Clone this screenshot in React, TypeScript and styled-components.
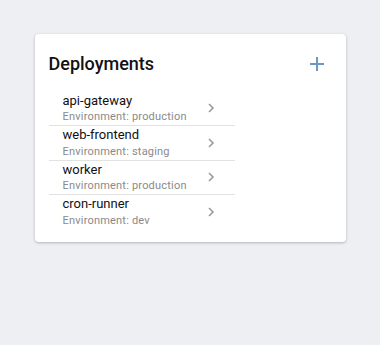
import React from 'react';
import styled, { createGlobalStyle } from 'styled-components';

const deployments = [
  { name: 'api-gateway', env: 'production' },
  { name: 'web-frontend', env: 'staging' },
  { name: 'worker', env: 'production' },
  { name: 'cron-runner', env: 'dev' },
];

const App: React.FC = () => {
  return (
    <>
      <GlobalStyle />
      <StyledPage>
        <StyledCard>
          <StyledHeader>
            <StyledTitle>Deployments</StyledTitle>
            <StyledAddButton aria-label="Add deployment">
              <svg width="14" height="14" viewBox="0 0 14 14">
                <path d="M7 0v14M0 7h14" stroke="currentColor" strokeWidth="2" fill="none" />
              </svg>
            </StyledAddButton>
          </StyledHeader>

          <StyledList>
            {deployments.map((d, i) => (
              <StyledRow key={d.name} $last={i === deployments.length - 1}>
                <StyledText>
                  <StyledName>{d.name}</StyledName>
                  <StyledEnv>Environment: {d.env}</StyledEnv>
                </StyledText>
                <StyledChevron width="8" height="10" viewBox="0 0 8 10">
                  <path d="M2 1l4 4-4 4" stroke="currentColor" strokeWidth="1.6" fill="none" />
                </StyledChevron>
              </StyledRow>
            ))}
          </StyledList>
        </StyledCard>
      </StyledPage>
    </>
  );
};

export default App;

// Style Tags
const GlobalStyle = createGlobalStyle`
  html, body {
    margin: 0;
    padding: 0;
    background: #eeeff3;
    font-family: Roboto, "Liberation Sans", sans-serif;
  }
`;

const StyledPage = styled.div`
  width: 380px;
  height: 345px;
  box-sizing: border-box;
  padding-top: 34px;
  display: flex;
  justify-content: center;
  align-items: flex-start;
`;

const StyledCard = styled.div`
  width: 311px;
  box-sizing: border-box;
  background: #fff;
  border-radius: 4px;
  box-shadow: 0 1px 3px rgba(0, 0, 0, 0.25);
  padding: 17px 14px 13px 14px;
`;

const StyledHeader = styled.div`
  display: flex;
  align-items: center;
  justify-content: space-between;
  height: 26px;
  margin-bottom: 14.5px;
`;

const StyledTitle = styled.h2`
  margin: 0;
  font-size: 18px;
  font-weight: 500;
  line-height: 26px;
  color: #111;
`;

const StyledAddButton = styled.button`
  border: none;
  background: none;
  padding: 0;
  margin-right: 8px;
  display: flex;
  color: #6b98c9;
  cursor: pointer;
`;

const StyledList = styled.div`
  width: 186px;
`;

const StyledRow = styled.div<{ $last: boolean }>`
  display: flex;
  align-items: center;
  justify-content: space-between;
  padding: 0 20px 0 14px;
  border-bottom: ${(p) => (p.$last ? 'none' : '1px solid #e2e2e2')};
`;

const StyledText = styled.div`
  display: flex;
  flex-direction: column;
`;

const StyledName = styled.div`
  font-size: 13px;
  line-height: 17.5px;
  color: #111;
`;

const StyledEnv = styled.div`
  font-size: 11px;
  line-height: 16px;
  color: #8a8a8a;
  letter-spacing: 0.2px;
`;

const StyledChevron = styled.svg`
  color: #9a9a9a;
`;
